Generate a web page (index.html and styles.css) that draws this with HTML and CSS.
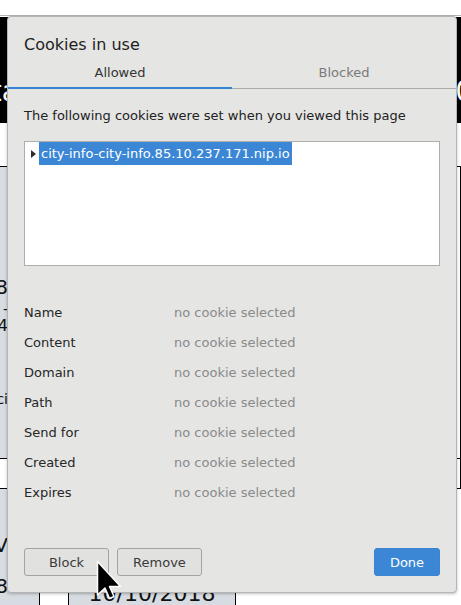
FILE: index.html
```html
<!DOCTYPE html>
<html lang="en">
<head>
<meta charset="utf-8">
<title>Cookies in use</title>
<link rel="stylesheet" href="styles.css">
</head>
<body>
<div class="page">
  <div class="topbar"></div>
  <div class="hero"><span class="hero-l">Data</span><span class="hero-r">0</span></div>
  <div class="spacer"></div>
  <div class="table">
    <div class="row r1">
      <div class="cell c1 gray">
        <div class="frags">
          <span class="big f1">2018</span>
          <span class="small f2">-</span>
          <span class="mid f3">1444</span>
          <span class="small f4">ci</span>
        </div>
      </div>
      <div class="cell c2"></div>
      <div class="cell c3"></div>
      <div class="cell c4"></div>
      <div class="cell c5 edge"></div>
    </div>
    <div class="row r2">
      <div class="cell c1"></div>
      <div class="cell c2"></div>
      <div class="cell c3"></div>
      <div class="cell c4"></div>
      <div class="cell c5"></div>
    </div>
    <div class="row r3">
      <div class="cell c1 gray">
        <div class="frags">
          <span class="big g1">V</span>
          <span class="big g2">18</span>
        </div>
      </div>
      <div class="cell c2"></div>
      <div class="cell c3 gray"><span class="date">10/10/2018</span></div>
      <div class="cell c4"></div>
      <div class="cell c5"></div>
    </div>
  </div>

  <div class="dialog">
    <h1 class="title">Cookies in use</h1>
    <div class="tabs">
      <div class="tab active">Allowed</div>
      <div class="tab">Blocked</div>
    </div>
    <div class="body">
      <p class="intro">The following cookies were set when you viewed this page</p>
      <div class="tree">
        <div class="node"><span class="arrow"></span><span class="label">city-info-city-info.85.10.237.171.nip.io</span></div>
      </div>
      <div class="details">
        <div class="key">Name</div><div class="val">no cookie selected</div>
        <div class="key">Content</div><div class="val">no cookie selected</div>
        <div class="key">Domain</div><div class="val">no cookie selected</div>
        <div class="key">Path</div><div class="val">no cookie selected</div>
        <div class="key">Send for</div><div class="val">no cookie selected</div>
        <div class="key">Created</div><div class="val">no cookie selected</div>
        <div class="key">Expires</div><div class="val">no cookie selected</div>
      </div>
    </div>
    <div class="actions">
      <button class="btn">Block</button>
      <button class="btn">Remove</button>
      <span class="grow"></span>
      <button class="btn primary">Done</button>
    </div>
  </div>

  <svg class="cursor" width="30" height="44" viewBox="0 0 30 44">
    <path d="M1.5 1.5 L1.5 35 L9 28 L13.5 38.5 L18 36.5 L13.5 26.5 L24.5 26.5 Z" fill="#000" stroke="#fff" stroke-width="1.5" stroke-linejoin="round"/>
  </svg>
</div>
</body>
</html>
```

FILE: styles.css
```css
* { box-sizing: border-box; }

html, body {
  margin: 0;
  padding: 0;
  background: #fff;
}

body {
  font-family: "DejaVu Sans", "Noto Sans", sans-serif;
}

.page {
  position: relative;
  width: 461px;
  height: 605px;
  overflow: hidden;
  background: #fff;
}

/* ---------- background page ---------- */
.topbar {
  height: 16px;
  border-bottom: 1px solid #b4b4b4;
}

.hero {
  margin-top: 1px;
  height: 106px;
  background: #000;
  color: #fff;
  display: flex;
  justify-content: space-between;
  align-items: flex-start;
  padding-top: 58px;
  font-size: 28px;
  line-height: 34px;
  overflow: hidden;
}

.hero-l { margin-left: -48px; }
.hero-r { margin-right: -12px; }

.spacer {
  height: 44px;
  border-bottom: 1px solid #000;
}

.table {
  display: flex;
  flex-direction: column;
}

.row {
  display: flex;
}

.r1 { height: 291px; }
.r2 { height: 30px; border-top: 1px solid #000; }
.r3 { height: 120px; border-top: 1px solid #000; }

.cell {
  overflow: hidden;
  color: #111;
}

.c1 { width: 39px; }
.c2 { width: 29px; border-left: 1px solid #000; }
.c3 { width: 167px; border-left: 1px solid #000; display: flex; justify-content: center; }
.c4 { width: 225px; border-left: 1px solid #000; }
.c5 { flex: 1; }
.c5.edge { border-left: 1px solid #000; }
.r2 .c5 { border-left: 1px solid #000; }

.gray { background: #d7dce2; }

.frags {
  display: flex;
  flex-direction: column;
  align-items: flex-end;
  padding-right: 31px;
  white-space: nowrap;
}

.big { font-size: 20px; line-height: 24px; }
.mid { font-size: 16px; line-height: 18px; }
.small { font-size: 14px; line-height: 16px; }

.f1 { margin-top: 108px; }
.f2 { margin-top: 2px; }
.f3 { margin-top: 0; }
.f4 { margin-top: 56px; }

.g1 { margin-top: 44px; }
.g2 { margin-top: 17px; }

.date {
  margin-top: 92px;
  font-size: 22px;
  line-height: 26px;
  white-space: nowrap;
}

/* ---------- dialog ---------- */
.dialog {
  position: absolute;
  left: 7px;
  top: 16px;
  width: 450px;
  height: 577px;
  background: #e5e5e4;
  border: 1px solid #b5b5b5;
  border-radius: 4px;
  box-shadow: 0 1px 3px rgba(0, 0, 0, 0.25);
  display: flex;
  flex-direction: column;
  color: #262626;
}

.title {
  margin: 0;
  padding: 18px 16px 0;
  font-size: 16px;
  font-weight: normal;
  line-height: 19px;
  color: #1e1e1e;
}

.tabs {
  display: flex;
  border-bottom: 1px solid #ababab;
}

.tab {
  flex: 1;
  text-align: center;
  font-size: 13px;
  line-height: 16px;
  padding: 11px 0 6px;
  margin-bottom: -1px;
  border-bottom: 2px solid transparent;
  color: #7a7a7a;
}

.tab.active {
  color: #333;
  border-bottom-color: #3584d6;
}

.body {
  padding: 0 16px;
}

.intro {
  margin: 19px 0 0;
  font-size: 13px;
  line-height: 16px;
  color: #222;
}

.tree {
  margin-top: 17px;
  height: 125px;
  background: #fff;
  border: 1px solid #adadad;
}

.node {
  display: flex;
  align-items: center;
  height: 23px;
}

.arrow {
  margin-left: 6px;
  width: 0;
  height: 0;
  border-left: 5px solid #2e2e2e;
  border-top: 4px solid transparent;
  border-bottom: 4px solid transparent;
}

.label {
  margin-left: 3px;
  padding: 0 2px;
  background: #3c87d5;
  color: #fff;
  font-size: 13px;
  line-height: 23px;
  white-space: nowrap;
}

.details {
  margin-top: 32px;
  display: grid;
  grid-template-columns: 150px 1fr;
  grid-auto-rows: 30px;
  font-size: 13px;
  line-height: 30px;
}

.key { color: #262626; }
.val { color: #8a8a8a; }

.actions {
  margin-top: auto;
  display: flex;
  gap: 8px;
  padding: 0 16px 16px;
}

.grow { flex: 1; }

.btn {
  height: 28px;
  width: 85px;
  padding: 0;
  border: 1px solid #a3a3a3;
  border-radius: 3px;
  background: #e1e1e0;
  font-family: "DejaVu Sans", "Noto Sans", sans-serif;
  font-size: 13px;
  color: #3a3a3a;
}

.btn.primary {
  width: 66px;
  background: #3b87d6;
  border-color: #3a84d1;
  color: #fff;
}

.cursor {
  position: absolute;
  left: 96px;
  top: 560px;
}
```
